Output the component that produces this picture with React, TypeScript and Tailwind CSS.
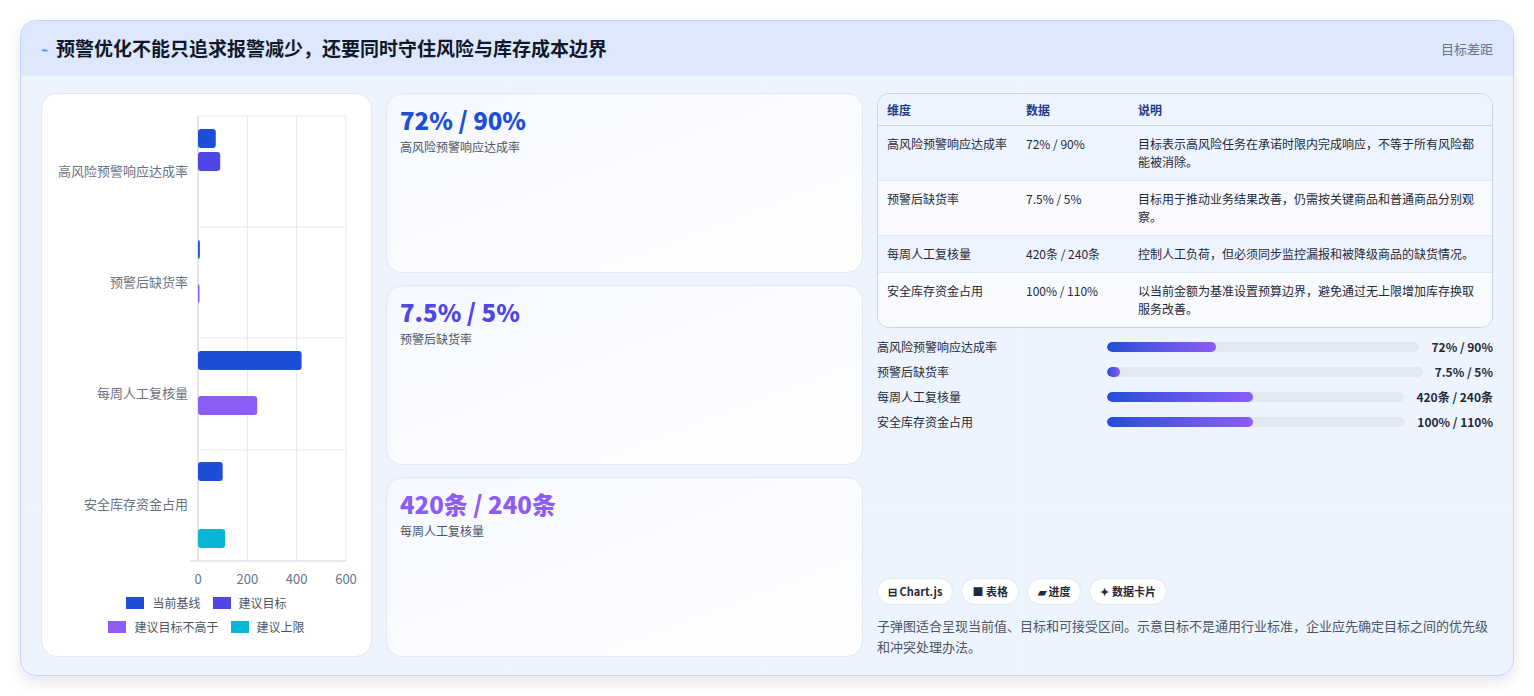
const font = { fontFamily: '"Noto Sans CJK SC", "Noto Sans", sans-serif' };

const cards = [
  { v: "72% / 90%", l: "高风险预警响应达成率", c: "text-[#1d4ed8]" },
  { v: "7.5% / 5%", l: "预警后缺货率", c: "text-[#4f46e5]" },
  { v: "420条 / 240条", l: "每周人工复核量", c: "text-[#8b5cf6]" },
];

const rows = [
  { k: "高风险预警响应达成率", d: "72% / 90%", s: "目标表示高风险任务在承诺时限内完成响应，不等于所有风险都能被消除。", bg: "bg-[#eef4ff]" },
  { k: "预警后缺货率", d: "7.5% / 5%", s: "目标用于推动业务结果改善，仍需按关键商品和普通商品分别观察。", bg: "bg-[#f8fafe]" },
  { k: "每周人工复核量", d: "420条 / 240条", s: "控制人工负荷，但必须同步监控漏报和被降级商品的缺货情况。", bg: "bg-[#eef4ff]" },
  { k: "安全库存资金占用", d: "100% / 110%", s: "以当前金额为基准设置预算边界，避免通过无上限增加库存换取服务改善。", bg: "bg-[#f8fafe]" },
];

const bars = [
  { k: "高风险预警响应达成率", v: "72% / 90%", p: 35 },
  { k: "预警后缺货率", v: "7.5% / 5%", p: 4 },
  { k: "每周人工复核量", v: "420条 / 240条", p: 49 },
  { k: "安全库存资金占用", v: "100% / 110%", p: 49 },
];

function Chart() {
  const x0 = 156;
  const s = 148 / 600;
  const cats = ["高风险预警响应达成率", "预警后缺货率", "每周人工复核量", "安全库存资金占用"];
  const data: [number, number, number, string][] = [
    [35, 72, 19, "#1d4ed8"],
    [58, 90, 19, "#4f46e5"],
    [146, 7.5, 19, "#1d4ed8"],
    [190, 5, 19, "#8b5cf6"],
    [257, 420, 19, "#1d4ed8"],
    [302, 240, 19, "#8b5cf6"],
    [368, 100, 19, "#1d4ed8"],
    [435, 110, 19, "#06b6d4"],
  ];
  return (
    <svg width="330" height="500" className="block">
      {[0, 200, 400, 600].map((t) => (
        <line key={t} x1={x0 + t * s} x2={x0 + t * s} y1={22} y2={467} stroke="#e5e7eb" />
      ))}
      {[22, 133, 244, 356].map((y) => (
        <line key={y} x1={x0} x2={x0 + 148} y1={y} y2={y} stroke="#e5e7eb" />
      ))}
      <line x1={x0} x2={x0} y1={22} y2={467} stroke="#d1d5db" />
      <line x1={x0 - 8} x2={x0 + 148} y1={467} y2={467} stroke="#cbd5e1" />
      {cats.map((c, i) => (
        <text key={c} x={x0 - 10} y={82 + i * 111} textAnchor="end" fontSize="13" fill="#6b7280" style={font}>
          {c}
        </text>
      ))}
      {data.map(([y, v, h, col], i) => (
        <rect key={i} x={x0} y={y} width={Math.max(v * s, 1.5)} height={h} rx="3" fill={col} />
      ))}
      {[0, 200, 400, 600].map((t) => (
        <text key={t} x={x0 + t * s} y={490} textAnchor="middle" fontSize="13" fill="#64748b" style={font}>
          {t}
        </text>
      ))}
    </svg>
  );
}

function Legend() {
  const items = [
    ["当前基线", "bg-[#1d4ed8]"],
    ["建议目标", "bg-[#4f46e5]"],
    ["建议目标不高于", "bg-[#8b5cf6]"],
    ["建议上限", "bg-[#06b6d4]"],
  ];
  return (
    <div className="flex flex-wrap justify-center gap-x-3 gap-y-1.5 px-6 text-[12px] text-[#4b5563]">
      {items.map(([t, c]) => (
        <div key={t} className="flex items-center gap-2">
          <span className={`w-[18px] h-[12px] ${c}`} />
          {t}
        </div>
      ))}
    </div>
  );
}

export default function App() {
  return (
    <div className="w-[1534px] h-[696px] bg-white p-5" style={font}>
      <div className="h-[656px] rounded-2xl border border-[#c7d2fe] bg-gradient-to-b from-[#eef4ff] to-[#eef4fe] overflow-hidden flex flex-col shadow-[0_6px_14px_rgba(30,41,59,0.12)]">
        <div className="h-[55px] shrink-0 bg-[#dde8fe] flex items-center justify-between px-5">
          <div className="flex items-center gap-2">
            <span className="text-[#3b82f6] text-[12px]">⌁</span>
            <h1 className="text-[19px] font-bold text-[#111827]">预警优化不能只追求报警减少，还要同时守住风险与库存成本边界</h1>
          </div>
          <span className="text-[13px] text-[#64748b]">目标差距</span>
        </div>
        <div className="flex-1 flex gap-[14px] px-5 pt-[17px] pb-[18px]">
          <div className="w-[331px] shrink-0 bg-white rounded-2xl border border-[#e5e7eb] flex flex-col">
            <Chart />
            <Legend />
          </div>
          <div className="w-[477px] shrink-0 flex flex-col gap-3">
            {cards.map((c) => (
              <div key={c.l} className="flex-1 rounded-2xl border border-[#e2e8f0] bg-gradient-to-br from-[#f5f8ff] to-white px-[13px] py-[10px]">
                <div className={`text-[24px] font-extrabold leading-[32px] ${c.c}`}>{c.v}</div>
                <div className="text-[12px] text-[#4b5563] mt-0.5">{c.l}</div>
              </div>
            ))}
          </div>
          <div className="flex-1 flex flex-col">
            <div className="rounded-xl border border-[#cbd5e1] overflow-hidden text-[12px] text-[#1f2937]">
              <div className="flex h-[32px] items-center bg-[#eef4ff] border-b border-[#cbd5e1] text-[#1e3a8a] font-semibold">
                <div className="w-[148px] pl-[9px]">维度</div>
                <div className="w-[112px]">数据</div>
                <div className="flex-1">说明</div>
              </div>
              {rows.map((r, i) => (
                <div key={r.k} className={`flex py-[9px] leading-[18px] ${r.bg} ${i < 3 ? "border-b border-[#e2e8f0]" : ""}`}>
                  <div className="w-[148px] pl-[9px]">{r.k}</div>
                  <div className="w-[112px]">{r.d}</div>
                  <div className="flex-1 pr-3">{r.s}</div>
                </div>
              ))}
            </div>
            <div className="mt-[10px] flex flex-col gap-[7px] text-[12px] text-[#1f2937]">
              {bars.map((b) => (
                <div key={b.k} className="flex items-center h-[18px] gap-3">
                  <div className="w-[218px] shrink-0">{b.k}</div>
                  <div className="flex-1 h-[10px] rounded-full bg-[#e2e8f0] overflow-hidden">
                    <div className="h-full rounded-full bg-gradient-to-r from-[#1d4ed8] to-[#8b5cf6]" style={{ width: `${b.p}%` }} />
                  </div>
                  <div className="font-bold text-[#1f2937] whitespace-nowrap">{b.v}</div>
                </div>
              ))}
            </div>
            <div className="mt-auto flex gap-2 text-[11px] font-semibold text-[#1f2937]">
              {["⊟ Chart.js", "■ 表格", "▰ 进度", "✦ 数据卡片"].map((t) => (
                <span key={t} className="px-[10px] h-[27px] flex items-center rounded-full bg-white border border-[#e2e8f0]">{t}</span>
              ))}
            </div>
            <p className="mt-[10px] text-[13px] leading-[21px] text-[#4b5563]">
              子弹图适合呈现当前值、目标和可接受区间。示意目标不是通用行业标准，企业应先确定目标之间的优先级和冲突处理办法。
            </p>
          </div>
        </div>
      </div>
    </div>
  );
}
